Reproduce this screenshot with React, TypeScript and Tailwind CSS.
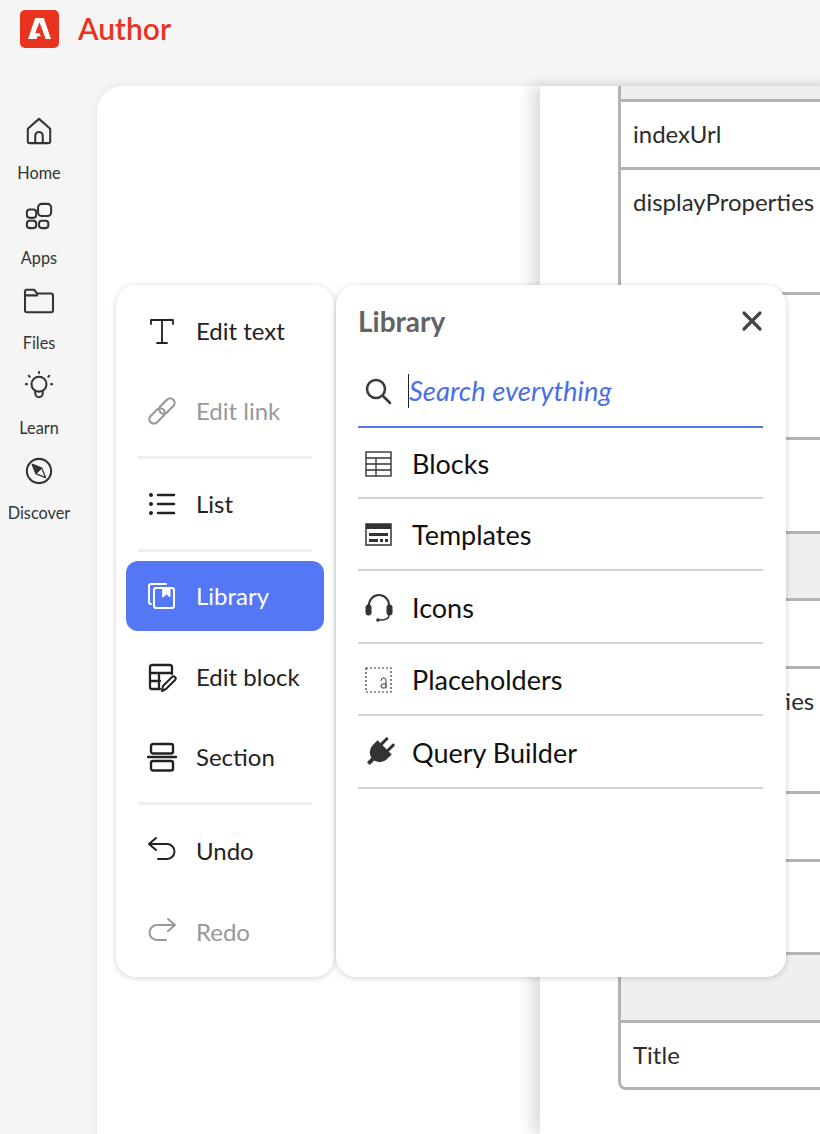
import type { ReactNode } from 'react';

const font = "font-['Lato','Noto_Sans',sans-serif]";

function Icon({ children, size = 30, className = '', weight = 2 }: { children: ReactNode; size?: number; className?: string; weight?: number }) {
    return (
        <svg width={size} height={size} viewBox="0 0 30 30" fill="none" stroke="currentColor" strokeWidth={weight} strokeLinecap="round" strokeLinejoin="round" className={className}>
            {children}
        </svg>
    );
}

const navItems = [
    { label: 'Home', icon: <><path d="M3 12.500 15 2l12 10.500V26a2 2 0 0 1-2 2H5a2 2 0 0 1-2-2z" /><path d="M11 28v-8a4 4 0 0 1 8 0v8" /></> },
    { label: 'Apps', icon: <><rect x="14" y="2" width="14" height="13" rx="4" /><rect x="2" y="8" width="10" height="9" rx="3" /><rect x="2" y="20" width="10" height="8" rx="3" /><rect x="15" y="20" width="10" height="8" rx="3" /></> },
    { label: 'Files', icon: <path d="M0 25V5a2 2 0 0 1 2-2h8l3 4h15a2 2 0 0 1 2 2v16a2 2 0 0 1-2 2H2a2 2 0 0 1-2-2zM0 9h13" /> },
    { label: 'Learn', icon: <><circle cx="15" cy="13" r="8" /><path d="M11 21v2a4 4 0 0 0 8 0v-2" /><path d="M15 0v1M4 4l1 1M26 4l-1 1M1 13h1M28 13h1" /></> },
    { label: 'Discover', icon: <><circle cx="15" cy="15" r="13" /><path d="m8 8 10 4 4 10-10-4z" strokeWidth="1.400" /><path d="m8 8 10 4-6 6z" fill="currentColor" strokeWidth="1" /></> },
];

const toolItems = [
    { label: 'Edit text', icon: <path strokeWidth="1.800" d="M4 8V4h22v4M15 4v23M10 27h10" /> },
    { label: 'Edit link', muted: true, icon: <g transform="rotate(-45 15 15)" strokeWidth="2.200"><rect x="-1" y="10.500" width="18" height="9" rx="4.500" /><rect x="13" y="10.500" width="18" height="9" rx="4.500" /></g> },
    { sep: true },
    { label: 'List', icon: <><path strokeWidth="2.400" d="M11 6h16M11 15h16M11 24h16" /><circle cx="4" cy="6" r="2" fill="currentColor" stroke="none" /><circle cx="4" cy="15" r="2" fill="currentColor" stroke="none" /><circle cx="4" cy="24" r="2" fill="currentColor" stroke="none" /></> },
    { sep: true },
    { label: 'Library', active: true, icon: <><path strokeWidth="2" d="M4 23a2 2 0 0 1-2-2V5a2 2 0 0 1 2-2h15" /><rect x="7" y="7" width="20" height="20" rx="2" /><path d="M16 7h7v9l-3.500-3-3.500 3z" fill="currentColor" strokeWidth="1" /></> },
    { label: 'Edit block', icon: <><path strokeWidth="2.300" d="M25 12V5a2 2 0 0 0-2-2H5a2 2 0 0 0-2 2v20a2 2 0 0 0 2 2h8M3 11h22M3 19h10M12 11v16" /><path d="m15 29 1-5 9-9a2 2 0 0 1 3 3l-9 9z" /></> },
    { label: 'Section', icon: <g strokeWidth="2.400"><path d="M1 15h28" /><rect x="4" y="2" width="22" height="9.500" rx="2" /><rect x="4" y="19" width="22" height="9.500" rx="2" /></g> },
    { sep: true, last: true },
    { label: 'Undo', icon: <path d="M9 2 2 8l7 6M2 8h18a7.500 7.500 0 0 1 0 15H11" /> },
    { label: 'Redo', muted: true, icon: <path d="m21 2 7 6-7 6M28 8H10a7.500 7.500 0 0 0 0 15h9" /> },
];

const libraryItems = [
    { label: 'Blocks', icon: <><rect x="2" y="3" width="25" height="24" strokeWidth="1.400" strokeLinejoin="miter" /><path strokeWidth="1.300" strokeLinecap="butt" d="M2 9h25M2 15h25M2 21h25M12 9v18" /></> },
    { label: 'Templates', icon: <><rect x="2" y="4" width="25" height="21" strokeWidth="1.500" strokeLinejoin="miter" /><path fill="currentColor" stroke="none" d="M2 4h25v5H2zM5 13h19v3H5zM5 19h9v3H5zM16 19h3v3h-3zM21 19h3v3h-3z" /></> },
    { label: 'Icons', icon: <><path d="M5 16v-4a10 10 0 0 1 20 0v4" /><rect x="2" y="12" width="5" height="10" rx="2" fill="currentColor" strokeWidth="1" /><rect x="23" y="12" width="5" height="10" rx="2" fill="currentColor" strokeWidth="1" /><path d="M25 22c0 4-4 5-9 5" strokeWidth="1.500" /><circle cx="14" cy="27" r="1.800" fill="currentColor" stroke="none" /></> },
    { label: 'Placeholders', icon: <><rect x="2" y="3" width="25" height="24" strokeWidth="1.200" strokeDasharray="2 2" strokeLinecap="butt" strokeLinejoin="miter" /><path strokeWidth="1" d="M17 15.500a2.500 2.500 0 0 1 5 0V23M22 19h-3a2 2 0 0 0 0 4h1c1 0 2-1 2-2" /></> },
    { label: 'Query Builder', icon: <g transform="rotate(45 15 15)" fill="currentColor" stroke="none"><rect x="9" y="-2" width="3" height="10" rx="1" /><rect x="18" y="-2" width="3" height="10" rx="1" /><path d="M5 7h20v7a10 10 0 0 1-20 0z" /><rect x="13" y="22" width="4" height="8" /></g> },
];

const rows = [
    { h: 'h-[13px]', grey: true, noBorder: true },
    { h: 'h-[68px]', text: 'indexUrl' },
    { h: 'h-[125px]', text: 'displayProperties' },
    { h: 'h-[145px]' },
    { h: 'h-[94px]' },
    { h: 'h-[67px]', grey: true },
    { h: 'h-[68px]' },
    { h: 'h-[125px]', text: 'displayProperties' },
    { h: 'h-[68px]' },
    { h: 'h-[93px]' },
    { h: 'h-[68px]', grey: true },
    { h: 'h-[67px]', text: 'Title' },
];

export default function App() {
    return (
        <div className={`${font} relative flex h-[1134px] w-[820px] flex-col overflow-hidden bg-[#f5f5f5] text-[#222]`}>
            <header className="flex h-[86px] shrink-0 items-start pl-5 pt-[10px]">
                <div className="flex h-[38px] w-[39px] items-center justify-center rounded-[5px] bg-[#e8341f]">
                    <svg width="23" height="22" viewBox="0 0 24 23" fill="#fff">
                        <path d="M7.500 0h9L24 22h-5.500L12 4.500 7.500 16H12l1.500 3H10l-1 3H0z" />
                    </svg>
                </div>
                <span className="ml-[19px] text-[30px] leading-[37px] font-semibold text-[#e8341f]">Author</span>
            </header>

            <div className="flex min-h-0 flex-1">
                <nav className="flex w-[97px] shrink-0 flex-col items-center pr-[19px] pt-[31px]">
                    {navItems.map((item) => (
                        <div key={item.label} className="flex h-[85px] w-[78px] shrink-0 flex-col items-center text-[#333]">
                            <Icon size={28} weight={2.200} className="overflow-visible">{item.icon}</Icon>
                            <span className="mt-[18px] text-[16.300px] leading-5">{item.label}</span>
                        </div>
                    ))}
                </nav>

                <main className="flex min-w-0 flex-1 rounded-tl-[26px] bg-white shadow-[0_0_8px_rgba(0,0,0,0.08)]">
                    <div className="w-[443px] shrink-0" />
                    <section className="flex-1 bg-white pl-[78px] shadow-[-8px_0_14px_rgba(0,0,0,0.14)]">
                        <div className="w-[300px] overflow-hidden rounded-bl-[8px] border-b-[3px] border-l-[3px] border-[#b3b3b3]">
                            {rows.map((row, i) => (
                                <div
                                    key={i}
                                    className={`${row.h} ${row.noBorder ? '' : 'border-t-[3px] border-[#b3b3b3]'} ${row.grey ? 'bg-[#efefef]' : 'bg-white'} ${row.text ? 'pt-[17px]' : ''} whitespace-nowrap pl-3 text-[24px] leading-[30px] text-[#2c2c2c]`}
                                >
                                    {row.text}
                                </div>
                            ))}
                        </div>
                    </section>
                </main>
            </div>

            {/* floating tool menu */}
            <div className="absolute left-[116px] top-[285px] flex h-[692px] w-[218px] flex-col rounded-[20px] bg-white px-[10px] pt-[5.500px] shadow-[0_1px_6px_rgba(0,0,0,0.18)]">
                {toolItems.map((item, i) =>
                    item.sep ? (
                        <div key={i} className={`mx-3 mt-[4.500px] ${item.last ? 'mb-[6px]' : 'mb-[4.500px]'} h-[3px] shrink-0 rounded bg-[#eeeeee]`} />
                    ) : (
                        <div key={i} className="flex h-[80.500px] shrink-0 items-center">
                            <div className={`flex h-[70px] w-full items-center rounded-[12px] pl-[21px] text-[24px] ${item.active ? 'bg-[#5477f5] text-white' : item.muted ? 'text-[#999]' : 'text-[#222]'}`}>
                                <Icon>{item.icon}</Icon>
                                <span className="ml-[19px]">{item.label}</span>
                            </div>
                        </div>
                    ),
                )}
            </div>

            {/* library panel */}
            <div className="absolute left-[336px] top-[285px] h-[692px] w-[450px] rounded-[20px] bg-white pl-[22px] pr-[23px] shadow-[0_1px_6px_rgba(0,0,0,0.18)]">
                <div className="flex h-[71px] items-center justify-between">
                    <span className="text-[28px] font-bold text-[#636363]">Library</span>
                    <svg width="22" height="22" viewBox="0 0 22 22" stroke="#444" strokeWidth="3.200" strokeLinecap="round">
                        <path d="m3 3 16 16M19 3 3 19" />
                    </svg>
                </div>
                <div className="flex h-[72px] items-center border-b-2 border-[#5477e8] pl-[6px]">
                    <svg width="28" height="28" viewBox="0 0 28 28" fill="none" stroke="#3c3c3c" strokeWidth="2.600" strokeLinecap="round">
                        <circle cx="12" cy="12" r="9" />
                        <path d="m19 19 7 7" />
                    </svg>
                    <span className="ml-[16px] h-[34px] w-px bg-[#222]" />
                    <span className="text-[27.400px] italic text-[#4a6ee8]">Search everything</span>
                </div>
                {libraryItems.map((item, i) => (
                    <div key={item.label} className={`flex ${i === 0 ? 'h-[70.500px]' : 'h-[72.500px]'} items-center border-b-2 border-[#d4d4d4] pl-[6px] pt-[3px] text-[#111]`}>
                        <Icon size={30} className="overflow-visible text-[#333]">{item.icon}</Icon>
                        <span className="ml-[18px] text-[27px]">{item.label}</span>
                    </div>
                ))}
            </div>
        </div>
    );
}
